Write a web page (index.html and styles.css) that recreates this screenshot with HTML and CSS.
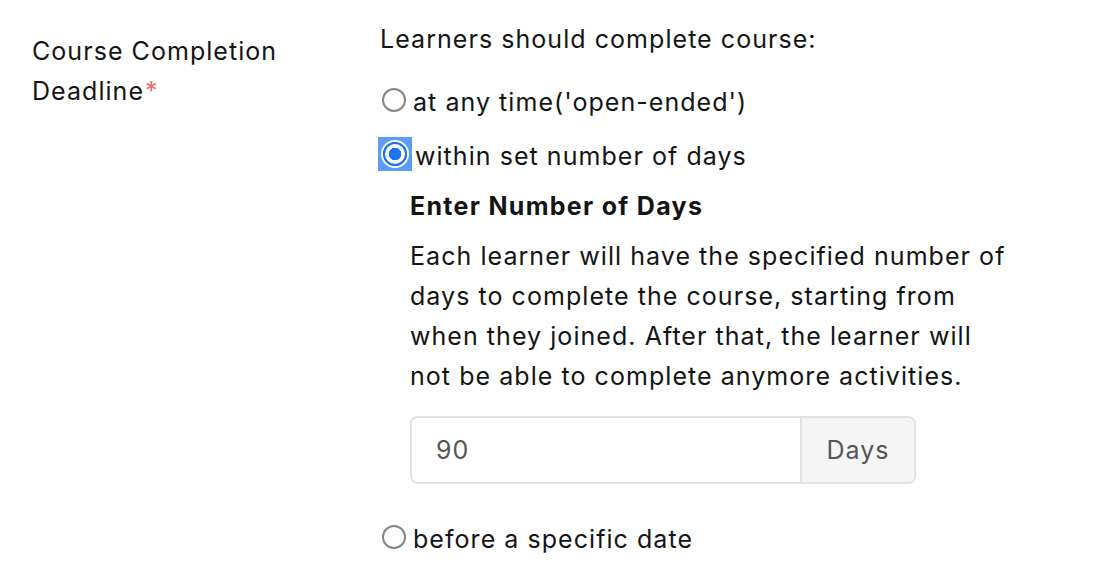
FILE: index.html
```html
<!DOCTYPE html>
<html lang="en">
<head>
  <meta charset="UTF-8" />
  <title>Course Completion Deadline</title>
  <link rel="stylesheet" href="styles.css">
</head>
<body>
  <div class="form-row">
    <!-- Field label -->
    <div class="field-label">Course Completion Deadline<span class="required">*</span></div>

    <!-- Field body -->
    <div class="field-body">
      <p class="prompt">Learners should complete course:</p>

      <label class="radio-row first">
        <input type="radio" name="deadline" value="open" />
        <span>at any time('open-ended')</span>
      </label>

      <label class="radio-row">
        <span class="focus-ring"><input type="radio" name="deadline" value="days" checked /></span>
        <span>within set number of days</span>
      </label>

      <div class="days-block">
        <h4>Enter Number of Days</h4>
        <p class="help">Each learner will have the specified number of days to complete the course, starting from when they joined. After that, the learner will not be able to complete anymore activities.</p>
        <div class="input-group">
          <input type="text" value="90" />
          <span class="addon">Days</span>
        </div>
      </div>

      <label class="radio-row last">
        <input type="radio" name="deadline" value="date" />
        <span>before a specific date</span>
      </label>
    </div>
  </div>
</body>
</html>
```

FILE: styles.css
```css
/* Global Styles */
body {
  font-family: 'Inter', 'Liberation Sans', sans-serif;
  font-size: 25px;
  line-height: 40px;
  letter-spacing: 1.05px;
  color: #141414;
  background: #fff;
  margin: 0;
}

/* Row layout */
.form-row {
  display: flex;
  padding: 19px 0 0 32px;
}

.field-label {
  width: 348px;
  padding-top: 12px;
  padding-right: 60px;
  box-sizing: border-box;
}

.required {
  color: #ef6f68;
  margin-left: 1px;
}

.field-body {
  width: 640px;
}

.prompt {
  margin: 0;
}

/* Radios */
.radio-row {
  display: flex;
  align-items: center;
  height: 40px;
  margin-top: 14px;
}

.radio-row.first {
  margin-top: 23px;
}

.radio-row.last {
  margin-top: 35px;
}

.radio-row input {
  appearance: none;
  -webkit-appearance: none;
  width: 24px;
  height: 24px;
  margin: 0 7px 0 2px;
  border: 2px solid #858585;
  border-radius: 50%;
  box-sizing: border-box;
  position: relative;
  top: -2px;
}

.radio-row input:checked {
  border: 2px solid #1a73f0;
  background: radial-gradient(circle, #1a73f0 0 6px, #fff 6.5px);
}

.focus-ring {
  display: inline-flex;
  width: 34px;
  height: 34px;
  margin-left: -2px;
  margin-right: 3px;
  background: #5a9cf8;
  align-items: center;
  justify-content: center;
  position: relative;
  top: -2px;
}

.focus-ring input {
  margin: 0;
  top: 0;
  background: #fff;
  box-shadow: 0 0 0 2px #fff;
}

/* Days sub-block */
.days-block {
  padding-left: 30px;
}

.days-block h4 {
  margin: 10px 0 0;
  font-size: 25px;
  font-weight: bold;
  letter-spacing: 1.3px;
}

.help {
  margin: 10px 0 0;
  width: 600px;
}

.input-group {
  display: flex;
  width: 506px;
  height: 68px;
  margin-top: 20px;
  border: 2px solid #e2e2e2;
  border-radius: 8px;
  box-sizing: border-box;
  overflow: hidden;
}

.input-group input {
  flex: 1;
  min-width: 0;
  border: none;
  outline: none;
  padding: 0 0 0 24px;
  font: inherit;
  letter-spacing: inherit;
  color: #555;
}

.addon {
  width: 114px;
  box-sizing: border-box;
  display: flex;
  align-items: center;
  justify-content: center;
  background: #f5f5f5;
  border-left: 2px solid #e2e2e2;
  color: #555;
}
```
